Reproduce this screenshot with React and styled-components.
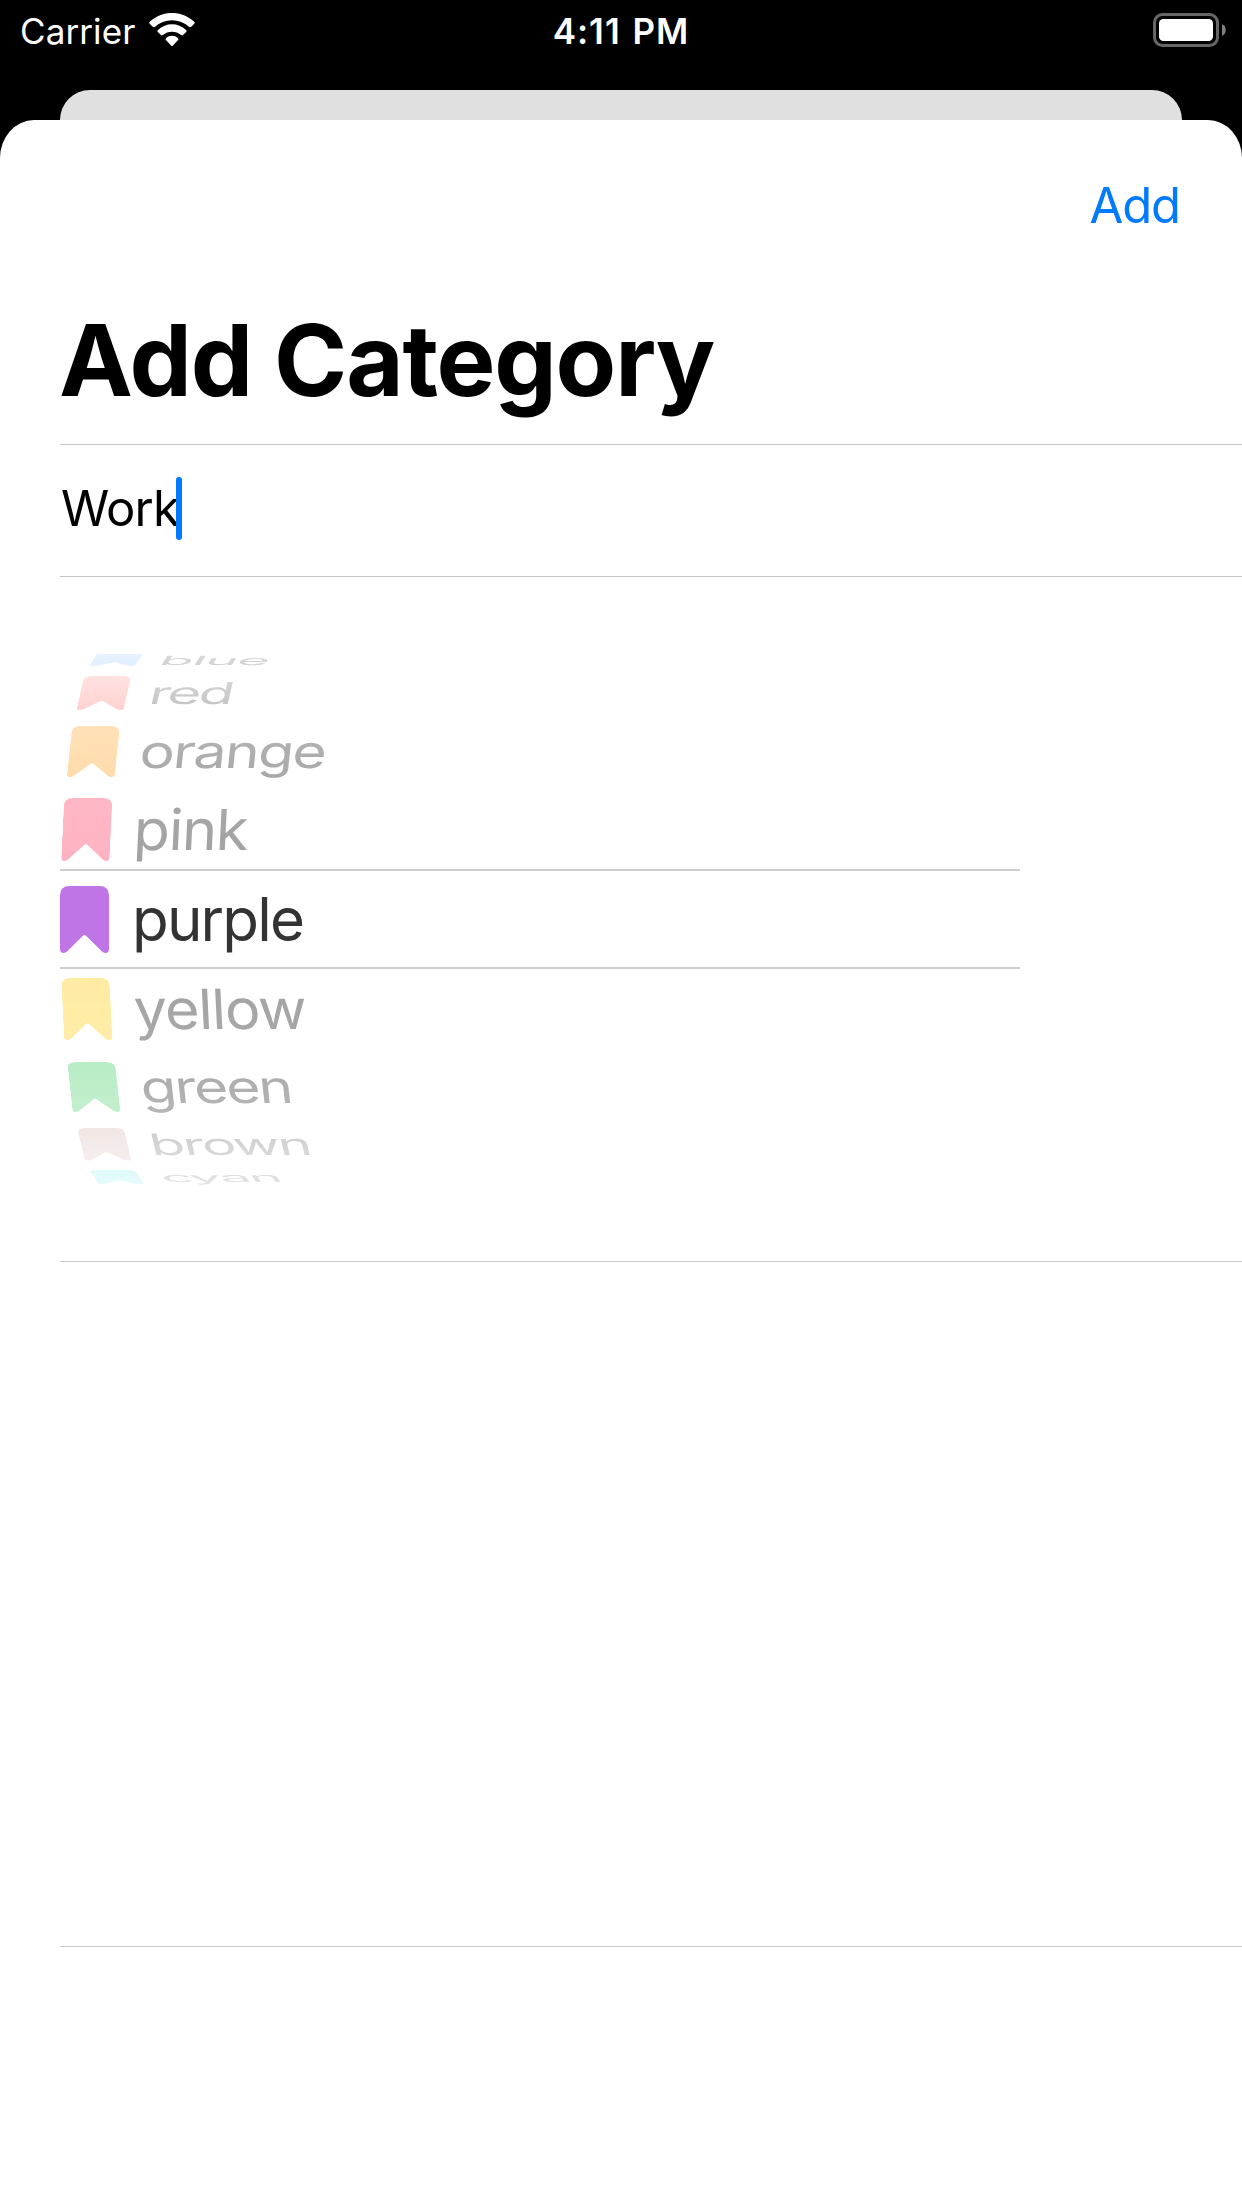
import React from "react";
import styled, { createGlobalStyle } from "styled-components";

const GlobalStyle = createGlobalStyle`
  *, *::before, *::after { box-sizing: border-box; }
  body { margin: 0; background: #000; font-family: Inter, "Liberation Sans", sans-serif; }
`;

const Screen = styled.div`
  width: 1242px;
  height: 2208px;
  display: flex;
  flex-direction: column;
  background: #000;
  overflow: hidden;
`;

const StatusBar = styled.header`
  height: 90px;
  flex: none;
  display: grid;
  grid-template-columns: 1fr auto 1fr;
  align-items: start;
  padding: 10px 16px 0;
  color: #fff;
  font-size: 35px;
  line-height: 43px;
`;

const CarrierGroup = styled.div`
  display: flex;
  align-items: flex-start;
  gap: 15px;
  padding-left: 4px;
`;

const Carrier = styled.span`
  width: 114px;
  letter-spacing: 0.1px;
  white-space: nowrap;
`;

const Wifi = styled.svg`
  width: 46px;
  height: 34px;
  margin-top: 3px;
`;

const Clock = styled.time`
  font-weight: 600;
  letter-spacing: 1px;
  word-spacing: 2px;
`;

const Battery = styled.svg`
  justify-self: end;
  width: 73px;
  height: 34px;
  margin-top: 3px;
`;

const BackCard = styled.div`
  height: 30px;
  flex: none;
  margin: 0 60px;
  background: #e0e0e0;
  border-radius: 30px 30px 0 0;
`;

const Sheet = styled.main`
  flex: 1;
  display: flex;
  flex-direction: column;
  background: #fff;
  border-radius: 34px 34px 0 0 / 38px 38px 0 0;
`;

const NavBar = styled.nav`
  height: 168px;
  flex: none;
  display: flex;
  justify-content: flex-end;
  padding: 56px 62px 0 0;
`;

const AddButton = styled.button`
  height: 60px;
  padding: 0;
  border: 0;
  background: none;
  color: #007aff;
  font: 400 49px/60px Inter, sans-serif;
  letter-spacing: -1.1px;
`;

const Title = styled.h1`
  height: 156px;
  flex: none;
  margin: 0;
  padding: 12px 0 0 59px;
  font-size: 99px;
  font-weight: 700;
  line-height: 120px;
  letter-spacing: -1.2px;
`;

const Section = styled.section`
  height: ${(p) => p.$height}px;
  flex: none;
  margin-left: 60px;
  border-top: 1px solid #c6c6c8;
`;

const Field = styled.div`
  display: flex;
  align-items: center;
  height: 100%;
  padding: 0 0 4px 1px;
  font-size: 49px;
  line-height: 60px;
`;

const FieldText = styled.span`
  width: 115px;
  letter-spacing: -0.8px;
  white-space: nowrap;
`;

const Caret = styled.span`
  width: 6px;
  height: 63px;
  border-radius: 3px;
  background: #007aff;
`;

const Wheel = styled.div`
  position: relative;
  width: 960px;
  height: 530px;
  margin-top: 77px;
`;

const WheelList = styled.ul`
  display: flex;
  flex-direction: column;
  margin: 0;
  padding: 0;
  list-style: none;
`;

const SelectionBand = styled.div`
  position: absolute;
  left: 0;
  right: 0;
  top: 215px;
  height: 100px;
  border: solid #cdcdcd;
  border-width: 2px 0;
`;

const WheelRow = styled.li`
  flex: none;
  height: ${(p) => p.$slot}px;
  padding-left: ${(p) => p.$indent}px;

  &:first-child {
    margin-top: -2px;
  }
`;

const Face = styled.div`
  display: flex;
  align-items: flex-start;
  gap: 23px;
  width: 500px;
  height: 80px;
  transform-origin: 0 0;
  transform: matrix(${(p) => p.$stretch}, 0, ${(p) => p.$slant}, ${(p) => p.$squash}, 0, 0);
  mask-image: linear-gradient(
    rgba(0, 0, 0, ${(p) => p.$fade[0]}),
    rgba(0, 0, 0, ${(p) => p.$fade[1]})
  );
`;

const Bookmark = styled.svg`
  width: 49px;
  height: 67px;
  flex: none;
  fill: ${(p) => p.$tint};
  clip-path: inset(${(p) => p.$trim}px 0 0 0);
`;

const Label = styled.span`
  margin-top: ${(p) => 5 + p.$drop}px;
  color: ${(p) => p.$ink};
  font-size: 60px;
  line-height: 56px;
  letter-spacing: ${(p) => p.$tracking}px;
`;

const rows = [
  { name: "blue", tint: "#bcdcff", ink: "#999", slot: 24, indent: 38, slant: -0.134, squash: 0.21, stretch: 0.935, fade: [0.36, 0.46], drop: 5, trim: 9.5, tracking: -1.2 },
  { name: "red", tint: "#ffb3b0", ink: "#999", slot: 50, indent: 24, slant: -0.115, squash: 0.507, stretch: 0.965, fade: [0.38, 0.64], tracking: -2.6 },
  { name: "orange", tint: "#ffd59c", ink: "#999", slot: 72, indent: 12, slant: -0.08, squash: 0.76, stretch: 0.98, fade: [0.72, 0.88], tracking: -1.7 },
  { name: "pink", tint: "#ffabbc", ink: "#999", slot: 88, indent: 3.5, slant: -0.045, squash: 0.94, stretch: 0.99, fade: [0.86, 0.92], tracking: -1.2 },
  { name: "purple", tint: "#bf75e6", ink: "#333", slot: 92, indent: 0, slant: 0, squash: 1, stretch: 1, fade: [1, 1], tracking: -1.8 },
  { name: "yellow", tint: "#ffe998", ink: "#999", slot: 84, indent: 1, slant: 0.045, squash: 0.925, stretch: 0.99, fade: [0.9, 0.84], tracking: -1.2 },
  { name: "green", tint: "#abe9b9", ink: "#999", slot: 66, indent: 7, slant: 0.083, squash: 0.746, stretch: 0.98, fade: [0.84, 0.7], tracking: -2 },
  { name: "brown", tint: "#e2cfca", ink: "#999", slot: 42, indent: 17, slant: 0.115, squash: 0.49, stretch: 0.955, fade: [0.5, 0.32], tracking: -2 },
  { name: "cyan", tint: "#a0f0f0", ink: "#999", slot: 30, indent: 29, slant: 0.14, squash: 0.21, stretch: 0.93, fade: [0.34, 0.26], tracking: -1.8 },
];

function ColorRow({ row }) {
  return (
    <WheelRow $slot={row.slot} $indent={row.indent}>
      <Face $slant={row.slant} $squash={row.squash} $stretch={row.stretch} $fade={row.fade}>
        <Bookmark viewBox="0 0 49 67" $tint={row.tint} $trim={row.trim ?? 0}>
          <path d="M0 9.5Q0 0 9.5 0H39.500Q49 0 49 9.500V63Q49 67 45.500 67Q43.500 67 41.500 65L26 49.800Q24.500 48.300 23 49.800L7.500 65Q5.500 67 3.500 67Q0 67 0 63Z" />
        </Bookmark>
        <Label $ink={row.ink} $drop={row.drop ?? 0} $tracking={row.tracking}>
          {row.name}
        </Label>
      </Face>
    </WheelRow>
  );
}

export default function App() {
  return (
    <>
      <GlobalStyle />
      <Screen>
        <StatusBar>
          <CarrierGroup>
            <Carrier>Carrier</Carrier>
            <Wifi viewBox="0 0 46 34" fill="#fff">
              <path d="M.7 10.700Q-.2 9.700 .8 8.800C13.500-3 32.500-3 45.200 8.800Q46.200 9.700 45.300 10.700L42 13.900Q41.200 14.700 40.300 13.900C30.500 5 15.500 5 5.700 13.900Q4.800 14.700 4 13.900Z" />
              <path d="M8.800 18.900Q7.900 17.900 8.900 17C17 9.300 29 9.300 37.100 17Q38.100 17.900 37.200 18.900L34 22.100Q33.100 22.900 32.200 22.100C27 17.500 19 17.500 13.800 22.100Q12.900 22.900 12 22.100Z" />
              <path d="M16.900 27.100Q16 26 17 25.200C20.500 22 25.500 22 29 25.200Q30 26 29.100 27.100L24 32.600Q23 33.600 22 32.600Z" />
            </Wifi>
          </CarrierGroup>
          <Clock>4:11 PM</Clock>
          <Battery viewBox="0 0 73 34">
            <rect x="1.500" y="1.500" width="63" height="31" rx="8" fill="none" stroke="#666" strokeWidth="3" />
            <rect x="6" y="6" width="54" height="22" rx="4.500" fill="#fff" />
            <path d="M69 11C74 13.500 74 20.500 69 23Z" fill="#808080" />
          </Battery>
        </StatusBar>
        <BackCard />
        <Sheet>
          <NavBar>
            <AddButton>Add</AddButton>
          </NavBar>
          <Title>Add Category</Title>
          <Section $height={132}>
            <Field>
              <FieldText>Work</FieldText>
              <Caret />
            </Field>
          </Section>
          <Section $height={685}>
            <Wheel>
              <WheelList>
                {rows.map((row) => (
                  <ColorRow key={row.name} row={row} />
                ))}
              </WheelList>
              <SelectionBand />
            </Wheel>
          </Section>
          <Section $height={685} />
          <Section $height={262} />
        </Sheet>
      </Screen>
    </>
  );
}
